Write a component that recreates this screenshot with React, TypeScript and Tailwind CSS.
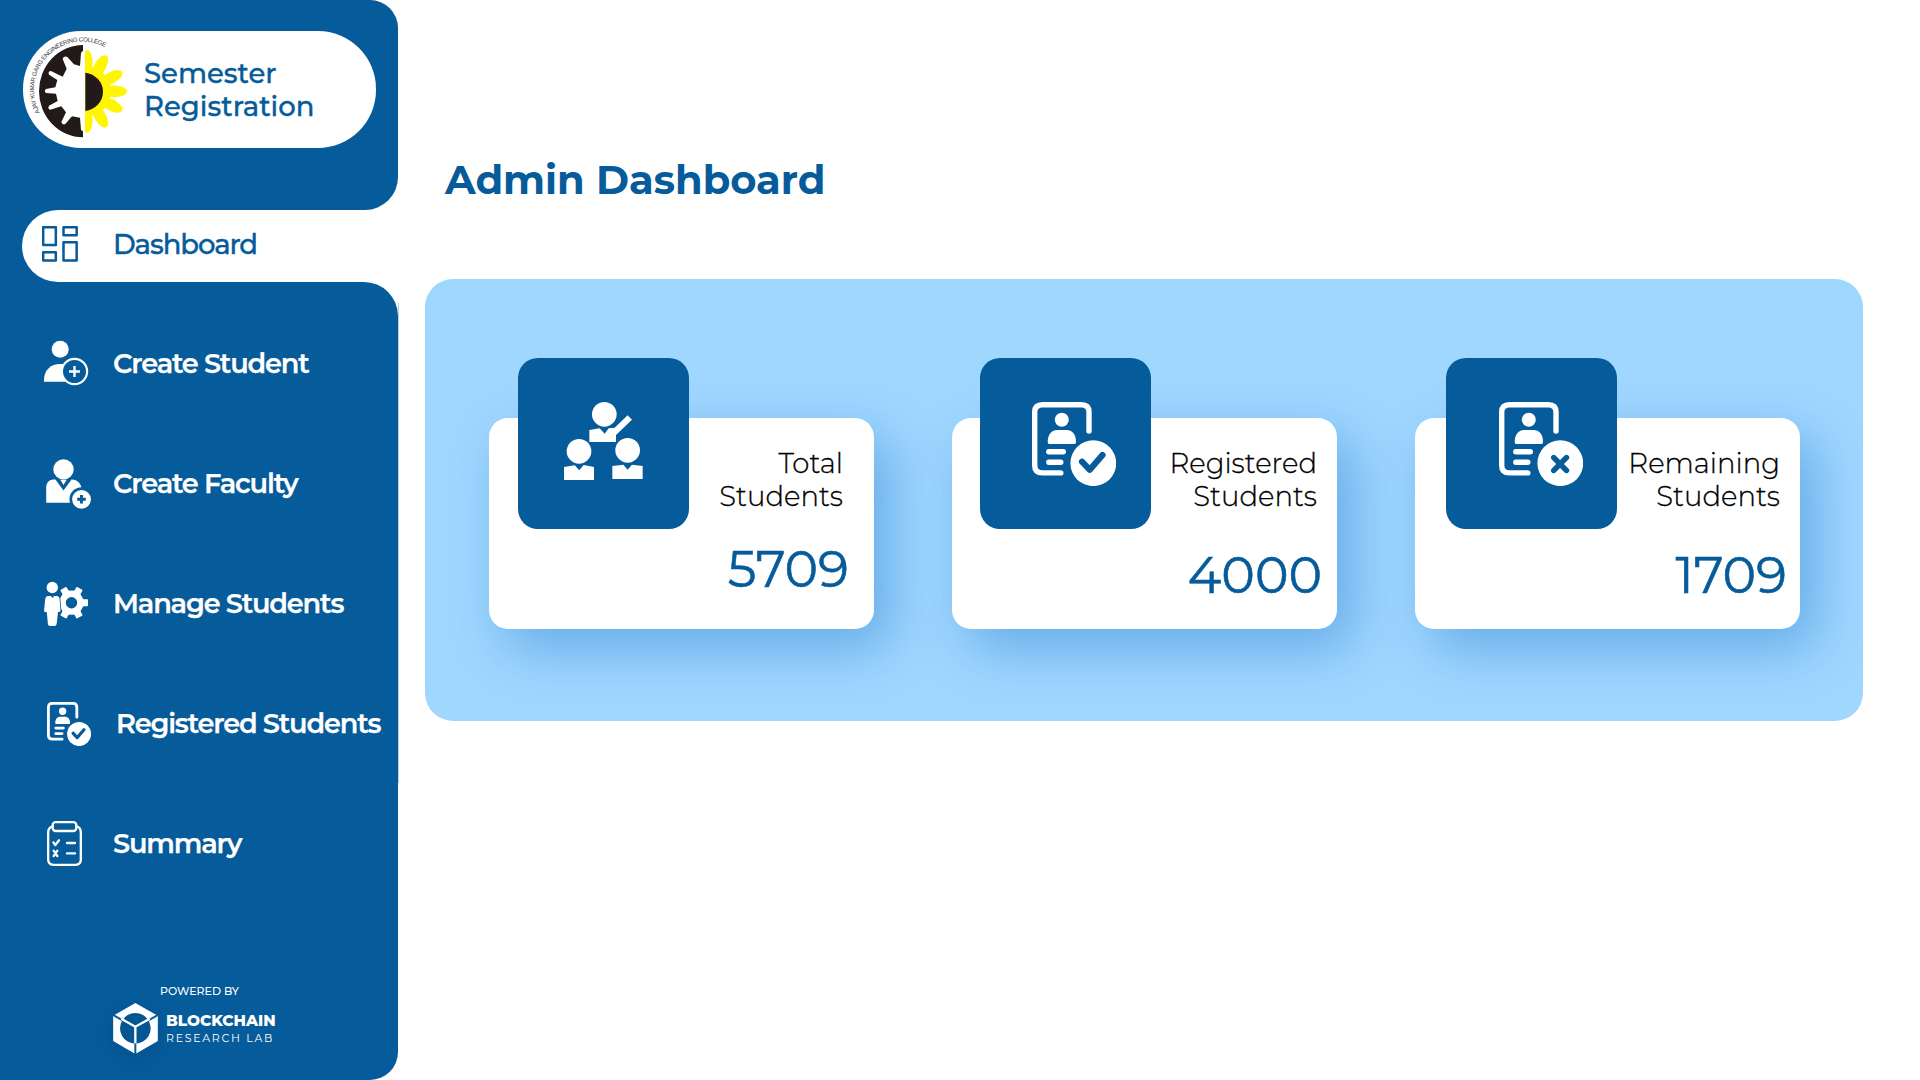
import React from "react";

const BLUE = "#065b9a";

function CollegeLogo() {
  return (
    <svg viewBox="69 93 330 330" className="h-[110px] w-[110px] shrink-0">
      <defs>
        <path id="motto" d="M119 337 A145 145 0 0 1 320 144" />
        <clipPath id="right-half">
          <rect x="255" y="100" width="140" height="330" />
        </clipPath>
      </defs>
      <text fontFamily="'Liberation Sans', Arial, sans-serif" fontSize="18.500" fill="#3a3a3a">
        <textPath href="#motto" textLength="368" lengthAdjust="spacing">AJAY KUMAR GARG ENGINEERING COLLEGE</textPath>
      </text>
      <path
        fill="#221a18"
        d="M249 135 A132 138.500 0 0 0 249 412 V394 L243 390 L240 353 L216 349 L196 372 Q187 376 184 366 L198 337 L184 319 L151 329 Q142 326 147 317 L173 303 L168 281 L138 279 Q131 273 138 267 L166 262 L172 240 L147 224 Q143 214 153 213 L188 230 L200 206 L188 177 Q191 167 202 171 L222 193 L240 198 L243 158 L249 152 Z"
      />
      <g clipPath="url(#right-half)" fill="#fff500">
        <circle cx="257" cy="274" r="76" />
        {[-88, -60, -28, 0, 28, 60, 88].map((a) => (
          <ellipse key={a} cx="343" cy="274" rx="38" ry="17.5" transform={`rotate(${a} 257 274)`} />
        ))}
      </g>
      <path d="M256 218 A61 58 0 0 1 256 333 Z" fill="#221a18" />
    </svg>
  );
}

function DashboardIcon() {
  return (
    <svg viewBox="126 678 108 108" className="h-9 w-9" fill="none" stroke={BLUE} strokeWidth="7.500" strokeLinejoin="round">
      <rect x="129.500" y="681.500" width="38" height="53.500" />
      <rect x="190.500" y="681.500" width="39.500" height="24" />
      <rect x="190.500" y="726.500" width="39.500" height="55" />
      <rect x="129.500" y="756.500" width="38" height="25" />
    </svg>
  );
}

function StudentPlusIcon() {
  return (
    <svg viewBox="40 335 56 56" className="h-14 w-14">
      <circle cx="60.200" cy="349.300" r="8.500" fill="#fff" />
      <path d="M44 381.700 V379 C44.500 370 51 364 60 364 H65 V381.700 Z" fill="#fff" />
      <circle cx="74.500" cy="371.500" r="12.600" fill={BLUE} stroke="#fff" strokeWidth="2.200" />
      <path d="M74.500 366 V377 M69 371.500 H80" stroke="#fff" strokeWidth="2.400" />
    </svg>
  );
}

function FacultyPlusIcon() {
  return (
    <svg viewBox="40 455 56 56" className="h-14 w-14">
      <path d="M46.200 502.700 V488 Q46.200 480.500 53 479.600 L55.500 479.400 L63.500 490.500 L71.500 479.400 L74 479.800 Q80 481 81.500 488 V502.700 Z" fill="#fff" />
      <path d="M60.300 479.800 H66.700 L63.500 485 Z" fill="#fff" />
      <circle cx="63.500" cy="469.400" r="10.200" fill="#fff" />
      <circle cx="81.500" cy="499.300" r="12" fill={BLUE} />
      <circle cx="81.500" cy="499.300" r="9.400" fill="#fff" />
      <path d="M81.500 495 V503.600 M77.200 499.300 H85.800" stroke={BLUE} strokeWidth="2.900" />
    </svg>
  );
}

function ManageIcon() {
  return (
    <svg viewBox="40 575 56 56" className="h-14 w-14">
      <circle cx="71.500" cy="602.700" r="8.900" fill="none" stroke="#fff" strokeWidth="6.400" />
      <g fill="#fff">
        {[0, 60, 120, 180, 240, 300].map((a) => (
          <path key={a} d="M81 598 L84 599.200 H87.300 Q88 599.200 88 600 V605.400 Q88 606.200 87.300 606.200 H84 L81 607.400 Z" transform={`rotate(${a} 71.500 602.700)`} />
        ))}
      </g>
      <g fill="#fff" stroke={BLUE} strokeWidth="1.600" paintOrder="stroke">
        <path d="M47.500 596 H57.500 Q59.300 596.500 59.600 599 L60.500 610.500 Q60.300 612.300 58 612 L56.800 623 Q56.500 626 54.500 626 H50 Q48 626 47.800 623 L46.800 612 Q44.300 612.500 44 611 L45.200 599 Q45.600 596.500 47.500 596 Z" />
        <circle cx="52.300" cy="587.500" r="5.700" />
      </g>
      <path d="M50.500 595.500 H54.500 L52.500 598 Z" fill={BLUE} />
    </svg>
  );
}

function RecordIcon({ mark, className }: { mark: "check" | "cross"; className: string }) {
  return (
    <svg viewBox="0 0 84 84" className={className} fill="none" strokeLinecap="round" strokeLinejoin="round">
      <path d="M28.800 70.900 H10.500 Q2.700 70.900 2.700 63.500 V10 Q2.700 2.700 10.500 2.700 H49.500 Q57 2.700 57 10 V29" stroke="#fff" strokeWidth="5.400" />
      <circle cx="29.800" cy="17.700" r="7" fill="#fff" />
      <path d="M17.200 42 Q15.700 42 15.700 40 C15.700 32 20 28 25 28 H34.500 C40 28 44 32 44 40 Q44 42 42.500 42 Z" fill="#fff" />
      <path d="M16.800 49.800 H31.300 M16.800 60.300 H28.800" stroke="#fff" strokeWidth="5.400" />
      <circle cx="61.300" cy="61.200" r="22.900" fill="#fff" />
      {mark === "check" ? (
        <path d="M50 59.700 L57.800 67.800 L70.500 53" stroke={BLUE} strokeWidth="6.200" />
      ) : (
        <path d="M54.800 55.600 L67.400 68.400 M67.400 55.600 L54.800 68.400" stroke={BLUE} strokeWidth="5.600" />
      )}
    </svg>
  );
}

function SummaryIcon() {
  return (
    <svg viewBox="81 783 105 135" className="h-[45px] w-[35px]" fill="none" stroke="#fff" strokeWidth="7" strokeLinecap="round" strokeLinejoin="round">
      <path d="M98 799 Q84.500 802 84.500 818 V898 Q84.500 914.500 100 914.500 H167 Q182.500 914.500 182.500 898 V818 Q182.500 802 170 799" />
      <rect x="98" y="786.500" width="71" height="26.500" rx="9" />
      <path d="M100 847 L106 855 L117 841" />
      <path d="M101 872 L112 888 M112 872 L101 888" />
      <path d="M141 849 H165 M141 880 H165" />
    </svg>
  );
}

function TeamIcon() {
  return (
    <svg viewBox="252 185 237 235" className="h-[78.3px] w-[79px]" fill="#fff">
      <circle cx="373" cy="222" r="37" />
      <path d="M328 269 L359 264 L374 280 L386 264 L404 262 L443 225 L456 238 L408 284 V305 H328 Z" />
      <circle cx="297" cy="333" r="37" />
      <path d="M252 380 L284 375 L298 390 L311 374 L342 380 V419 H252 Z" />
      <circle cx="443" cy="330" r="37" />
      <path d="M397 377 L430 373 L443 388 L456 373 L488 377 V416 H397 Z" />
    </svg>
  );
}

function LabLogo() {
  return (
    <svg viewBox="69 129 134 153" className="h-[51px] w-[45px] overflow-visible drop-shadow-[0_6px_8px_rgba(0,30,70,0.2)]">
      <path fillRule="evenodd" fill="#fff" d="M135.500 129 L203 167 V243 L135.500 282 L69 243 V167 Z M135.500 159 A46 46 0 1 0 135.600 159 Z" />
      <path d="M67 164 L97 181 M205 164 L175 181 M135.500 251 V284" stroke={BLUE} strokeWidth="6" />
      <path d="M93 176 L135.500 200 L179 176 M135.500 198 V250" stroke="#fff" strokeWidth="7" fill="none" />
    </svg>
  );
}

const navItems = [
  { label: "Create Student", icon: <StudentPlusIcon />, iconPad: "pl-10", gap: "w-[73px]", edge: "border-[#b9d1e5]" },
  { label: "Create Faculty", icon: <FacultyPlusIcon />, iconPad: "pl-10", gap: "w-[73px]", edge: "border-[#b9d1e5]" },
  { label: "Manage Students", icon: <ManageIcon />, iconPad: "pl-10", gap: "w-[73px]", edge: "border-[#b9d1e5]" },
  { label: "Registered Students", icon: <RecordIcon mark="check" className="mt-px h-11 w-11" />, iconPad: "pl-[47px]", gap: "w-[69px]", edge: "border-[#b9d1e5]" },
  { label: "Summary", icon: <SummaryIcon />, iconPad: "pl-[47px]", gap: "w-[66px]", edge: "border-white" },
];

const cards = [
  {
    lines: ["Total", "Students"],
    value: "5709",
    icon: <TeamIcon />,
    tile: "left-[29px] pl-[46px]",
    labelPad: "pr-[31px]",
    valueStyle: "mt-[31px] pr-[25px]",
  },
  {
    lines: ["Registered", "Students"],
    value: "4000",
    icon: <RecordIcon mark="check" className="h-[84px] w-[84px]" />,
    tile: "left-7 pl-[52px]",
    labelPad: "pr-5",
    valueStyle: "mt-[37px] pr-[15px]",
  },
  {
    lines: ["Remaining", "Students"],
    value: "1709",
    icon: <RecordIcon mark="cross" className="h-[84px] w-[84px]" />,
    tile: "left-[31px] pl-[53px]",
    labelPad: "pr-5",
    valueStyle: "mt-[37px] pr-[13px]",
  },
];

function Sidebar() {
  return (
    <aside className="flex h-[1080px] w-[399px] shrink-0 flex-col">
      <div className="flex h-[282px] w-[398px] flex-col bg-white">
        <div className="h-[210px] rounded-tr-[28px] rounded-br-[33px] bg-[#065b9a] pt-[31px] pl-[23px]">
          <div className="flex h-[117px] w-[353px] rounded-[58px] bg-white">
            <CollegeLogo />
            <div className="pt-[26px] pl-[11px] text-[27.5px] leading-[33px] font-medium text-[#065b9a] [-webkit-text-stroke:0.35px_#065b9a]">
              <div>Semester</div>
              <div>Registration</div>
            </div>
          </div>
        </div>
        <div className="h-[72px] bg-[linear-gradient(to_right,#065b9a_150px,#ffffff_150px)] pl-[22px]">
          <div className="-mr-px flex h-full items-center rounded-l-[36px] bg-white pb-[4px] pl-5">
            <DashboardIcon />
            <span className="pl-[35px] text-[27.5px] leading-9 font-medium tracking-[-1.1px] text-[#065b9a] [-webkit-text-stroke:0.35px_#065b9a]">Dashboard</span>
          </div>
        </div>
      </div>
      <div className="flex w-[398px] grow flex-col rounded-tr-[34px] rounded-br-[28px] bg-[#065b9a] pt-[21px]">
        <nav className="flex w-[399px] flex-col">
          {navItems.map((n) => (
            <div key={n.label} className={`flex h-[120px] items-center border-r ${n.edge} ${n.iconPad}`}>
              <span className={`shrink-0 ${n.gap}`}>{n.icon}</span>
              <span className="mt-[2px] text-[27.2px] leading-9 font-semibold tracking-[-1.17px] whitespace-nowrap text-white [-webkit-text-stroke:0.25px_#ffffff]">{n.label}</span>
            </div>
          ))}
        </nav>
        <div className="flex flex-col pt-[80px] text-white">
          <div className="pl-[160px] text-[11px] leading-4 font-medium">POWERED BY</div>
          <div className="flex pt-1 pl-[113px]">
            <LabLogo />
            <div className="pt-2 pl-2">
              <div className="text-[15.4px] leading-5 font-extrabold">BLOCKCHAIN</div>
              <div className="-mt-px text-[11px] leading-4 tracking-[1.7px]">RESEARCH LAB</div>
            </div>
          </div>
        </div>
      </div>
    </aside>
  );
}

export default function App() {
  return (
    <div className="flex h-[1080px] w-[1920px] overflow-hidden bg-white font-['Montserrat','Inter',sans-serif]">
      <Sidebar />
      <main className="flex flex-col pt-[156px] pl-[26px]">
        <h1 className="pl-[20px] text-[40px] leading-[48px] font-bold text-[#065b9a]">Admin Dashboard</h1>
        <section className="mt-[75px] flex h-[442px] w-[1438px] gap-[78px] overflow-hidden rounded-[28px] bg-[#a0d7ff] pt-[139px] pl-16">
          {cards.map((c) => (
            <article key={c.value} className="relative h-[211px] w-[385px] rounded-[19px] bg-white pt-[29px] text-right shadow-[16px_20px_54px_rgba(20,112,200,0.42)]">
              <div className={`absolute -top-[60px] h-[171px] w-[171px] rounded-[20px] bg-[#065b9a] pt-11 ${c.tile}`}>{c.icon}</div>
              <div className={`text-[27.5px] leading-[33px] font-light text-black [-webkit-text-stroke:0.3px_#000000] ${c.labelPad}`}>
                {c.lines.map((t) => (
                  <div key={t}>{t}</div>
                ))}
              </div>
              <div className={`text-[50.7px] leading-[50px] font-normal text-[#065b9a] [-webkit-text-stroke:0.6px_#065b9a] ${c.valueStyle}`}>{c.value}</div>
            </article>
          ))}
        </section>
      </main>
    </div>
  );
}
